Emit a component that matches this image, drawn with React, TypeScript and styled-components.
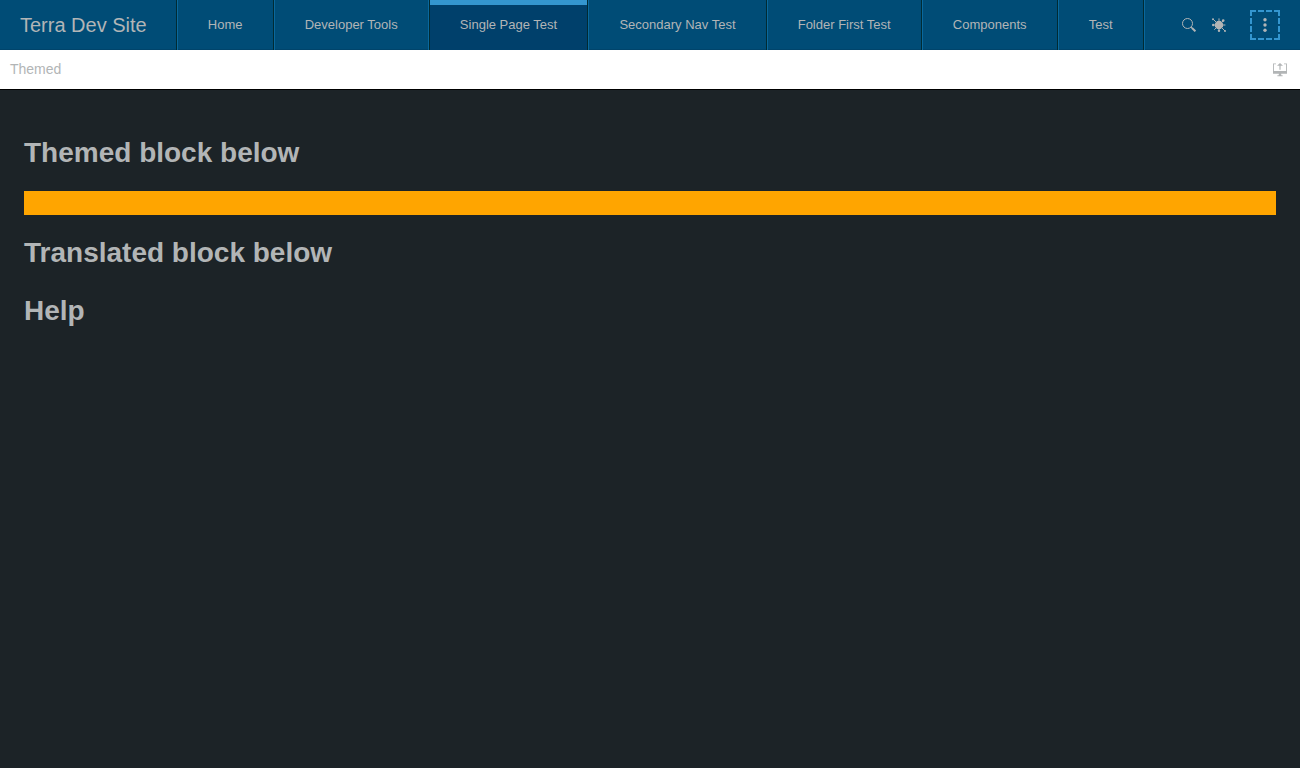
import React from "react";
import styled, { createGlobalStyle } from "styled-components";

const GlobalStyle = createGlobalStyle`
  * { box-sizing: border-box; }
  body {
    margin: 0;
    background: #1c2327;
    color: #b2b5b6;
    font-family: "Liberation Sans", Arial, sans-serif;
  }
`;

const Header = styled.header`
  display: flex;
  height: 50px;
  background: #004c76;
  box-shadow: inset 0 -1px 0 #00446b;
`;

const Title = styled.div`
  display: flex;
  align-items: center;
  padding: 0 29px 0 20px;
  border-right: 1px solid #012b33;
  font-size: 20px;
  white-space: nowrap;
`;

const Tabs = styled.nav`
  display: flex;
  min-width: 967px;
`;

const Tab = styled.button<{ $selected?: boolean; $beforeSelected?: boolean }>`
  flex: 1 0 auto;
  padding: 0 30px 2px;
  border: 0;
  border-left: 1px solid ${(p) => (p.$selected ? "#012b33" : "#0a689c")};
  border-right: 1px solid ${(p) => (p.$beforeSelected ? "#0a689c" : "#012b33")};
  background: ${(p) =>
    p.$selected
      ? "linear-gradient(#3496cf 5px, #00406b 5px)"
      : "transparent"};
  color: inherit;
  font-family: inherit;
  font-size: 13px;
  white-space: nowrap;
  cursor: pointer;
`;

const Utilities = styled.div`
  display: flex;
  flex: 1;
  align-items: center;
  justify-content: flex-end;
  padding-right: 20px;
  border-left: 1px solid #0a689c;
`;

const IconButton = styled.button<{ $focused?: boolean }>`
  display: flex;
  align-items: center;
  justify-content: center;
  width: 30px;
  height: 30px;
  padding: 0;
  border: ${(p) => (p.$focused ? "2px dashed #3496cf" : "0")};
  margin-left: ${(p) => (p.$focused ? "16px" : "0")};
  background: transparent;
  color: inherit;
  cursor: pointer;
`;

const PageBar = styled.div`
  display: flex;
  align-items: center;
  justify-content: space-between;
  height: 40px;
  padding: 0 5px 0 10px;
  border-bottom: 1px solid #000;
  background: #fff;
`;

const PageTitle = styled.span`
  padding-bottom: 2px;
  font-size: 14px;
`;

const Content = styled.main`
  padding: 25px 24px 24px;
  display: flow-root;
`;

const Heading = styled.h1`
  margin: 19px 0;
  padding: 3px 0;
  font-size: 28px;
  line-height: 32px;

  & + & {
    margin-top: 20px;
  }
`;

const ThemedBlock = styled.div`
  height: 24px;
  background: #ffa500;
`;

const tabs = [
  "Home",
  "Developer Tools",
  "Single Page Test",
  "Secondary Nav Test",
  "Folder First Test",
  "Components",
  "Test",
];
const selectedIndex = 2;

const SearchIcon = () => (
  <svg width="14" height="14" viewBox="0 0 14 14" fill="none" stroke="currentColor">
    <circle cx="5.5" cy="5.5" r="5" />
    <path d="M9.1 9.1l1.2 1.2" strokeWidth="1.1" />
    <path d="M10 10l3.4 3.3" strokeWidth="2" />
  </svg>
);

const BugIcon = () => (
  <svg width="14" height="14" viewBox="0 0 14 14" fill="currentColor" stroke="currentColor">
    <path d="M5.2 2.9h3.6l2.2 2.3v3.6l-2.2 2.3H5.2L3 8.8V5.2z" stroke="none" />
    <path d="M1 1l3.5 3.5M11.2 2.8L9.5 4.5M2.3 11.7l2.2-2.2M9.5 9.5L13 13M7 .4v3M7 10v3M1 7h3M10 7h3.4" fill="none" />
    <g stroke="none">
      <circle cx="11.2" cy="2.6" r="1.3" />
      <circle cx="1" cy="1.2" r="1" />
      <circle cx="13" cy="13" r="1" />
      <circle cx="7" cy="12.8" r="1.2" />
      <circle cx="1.2" cy="7" r="1.2" />
    </g>
  </svg>
);

const MenuIcon = () => (
  <svg width="14" height="14" viewBox="0 0 14 14" fill="currentColor">
    <circle cx="7" cy="1.7" r="1.7" />
    <circle cx="7" cy="7" r="1.7" />
    <circle cx="7" cy="12.3" r="1.7" />
  </svg>
);

const LaunchIcon = () => (
  <svg width="14" height="14" viewBox="0 0 14 14" fill="currentColor">
    <path d="M0 .4h3v.8H.9v6.8h12.2V1.2H11V.4h3v10.4H8.2v1.5h1.4v1H4.4v-1h1.4v-1.5H0z" />
    <path d="M7 0l3 2.8H7.6v4H6.4v-4H4z" />
  </svg>
);

export default function App() {
  return (
    <>
      <GlobalStyle />
      <Header>
        <Title>Terra Dev Site</Title>
        <Tabs aria-label="Main">
          {tabs.map((name, i) => (
            <Tab
              key={name}
              type="button"
              $selected={i === selectedIndex}
              $beforeSelected={i === selectedIndex - 1}
              aria-current={i === selectedIndex ? "page" : undefined}
            >
              {name}
            </Tab>
          ))}
        </Tabs>
        <Utilities>
          <IconButton type="button" aria-label="Search"><SearchIcon /></IconButton>
          <IconButton type="button" aria-label="Debug"><BugIcon /></IconButton>
          <IconButton type="button" aria-label="Menu" $focused><MenuIcon /></IconButton>
        </Utilities>
      </Header>
      <PageBar>
        <PageTitle>Themed</PageTitle>
        <IconButton type="button" aria-label="Open modal"><LaunchIcon /></IconButton>
      </PageBar>
      <Content>
        <Heading>Themed block below</Heading>
        <ThemedBlock />
        <Heading>Translated block below</Heading>
        <Heading>Help</Heading>
      </Content>
    </>
  );
}
